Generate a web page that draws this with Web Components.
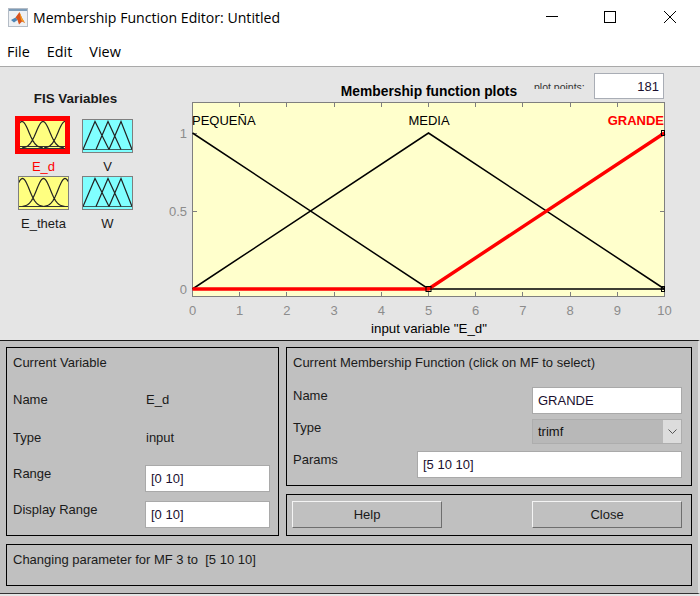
<!DOCTYPE html>
<html>
<head>
<meta charset="utf-8">
<style>
  html, body { margin: 0; padding: 0; background: #e5e5e5; }
  body { width: 700px; height: 596px; overflow: hidden; font-family: "Liberation Sans", Arial, sans-serif; }
</style>
</head>
<body>

<template id="title-tpl">
  <style>
    :host { display: flex; align-items: center; height: 34px; background: #fff; padding-left: 8px; font-family: "Open Sans", "Noto Sans", sans-serif; color: #000; }
    svg { display: block; flex: none; }
    .t { margin-left: 5px; flex: 1; font-size: 14.1px; white-space: nowrap; }
    .btns { display: flex; gap: 13px; margin-right: 7px; }
    .btns svg { width: 46px; height: 14px; }
  </style>
  <svg width="20" height="19" viewBox="0 0 20 19">
    <rect x="0.5" y="0.5" width="19" height="18" fill="#eef1f4" stroke="#b4bcc6"/>
    <rect x="1" y="1" width="18" height="2" fill="#7d9cb8"/>
    <path d="M3 12 L7.5 9.5 L9.5 12 L6 14.5 Z" fill="#4f86b5"/>
    <path d="M7.5 9.5 L11.5 4 L14 10 L17 15 L14 13.5 L11 16.5 L9.5 12 Z" fill="#d8521c"/>
    <path d="M11.5 4 L14 10 L17 15 L13 12 Z" fill="#f4a21f"/>
  </svg>
  <span class="t"><slot></slot></span>
  <span class="btns">
    <svg viewBox="0 0 46 14"><path d="M17 6.5 H29" stroke="#000" fill="none"/></svg>
    <svg viewBox="0 0 46 14"><rect x="16.5" y="1.5" width="11" height="11" stroke="#000" fill="none"/></svg>
    <svg viewBox="0 0 46 14"><path d="M17 1 L29 13 M29 1 L17 13" stroke="#000" fill="none"/></svg>
  </span>
</template>

<template id="menu-tpl">
  <style>
    :host { display: flex; gap: 17px; height: 33px; box-sizing: border-box; padding: 9px 0 0 7px; background: #fff; border-bottom: 1px solid #a9a9a9; font-family: "Open Sans", "Noto Sans", sans-serif; font-size: 14.4px; line-height: 18px; color: #000; }
  </style>
  <span>File</span><span>Edit</span><span>View</span>
</template>

<template id="fis-tpl">
  <style>
    :host { display: block; width: 160px; flex: none; color: #000; }
    h4 { margin: 0; font-size: 13.4px; line-height: 14px; font-weight: bold; color: #1a1a1a; width: 151px; text-align: center; padding-top: 25px; }
    .grid { display: grid; grid-template-columns: 51px 51px; column-gap: 13px; padding: 13px 0 0 18px; }
  </style>
  <h4>FIS Variables</h4>
  <div class="grid"><slot></slot></div>
</template>

<template id="var-tpl">
  <style>
    :host { display: block; width: 51px; font-size: 13px; color: #1a1a1a; text-align: center; }
    :host([selected]) { color: #f00; }
    .box { box-sizing: border-box; width: 51px; height: 34px; border: 1px solid #7f7f7f; display: block; }
    :host([selected]) .box { width: 55px; height: 38px; margin: -3px -1px -1px -3px; border: 5px solid #f00; }
    svg { display: block; width: 100%; height: 100%; }
    .lab { display: block; margin: 0 -6px; height: 23px; line-height: 14px; padding-top: 7px; box-sizing: border-box; white-space: nowrap; }
  </style>
  <span class="box"><svg></svg></span>
  <span class="lab"></span>
</template>

<template id="plot-tpl">
  <style>
    :host { display: block; width: 540px; height: 273px; flex: none; position: relative; }
    svg { display: block; position: absolute; left: 0; top: 0; }
    text { font-family: "Liberation Sans", Arial, sans-serif; font-size: 13px; }
    .g { fill: #8c8c8c; }
    .count { position: absolute; left: 434px; top: 6px; box-sizing: border-box; width: 70px; height: 26px; background: #fff; border: 1px solid #a9adb5; text-align: right; font-size: 13px; line-height: 25px; padding-right: 4px; color: #1a0f2e; }
    .pp { position: absolute; left: 374px; top: 13px; height: 9px; overflow: hidden; font-size: 10.5px; line-height: 14px; color: #333; white-space: nowrap; }
  </style>
  <svg width="540" height="273" viewBox="160 67 540 273"></svg>
  <div class="pp">plot points:</div>
  <div class="count">181</div>
</template>

<template id="field-tpl">
  <style>
    :host { display: block; box-sizing: border-box; height: 27px; background: #fff; border: 1px solid #a9a9a9; padding-left: 5px; font-size: 13px; line-height: 25px; color: #1a0f2e; white-space: nowrap; }
  </style>
  <slot></slot>
</template>

<template id="combo-tpl">
  <style>
    :host { display: flex; box-sizing: border-box; height: 25px; border: 1px solid #adadad; background: #b8b8b8; font-size: 13px; line-height: 23px; color: #111; }
    .v { flex: 1; padding-left: 5px; }
    .a { width: 18px; background: #dcdcdc; display: flex; align-items: center; justify-content: center; }
  </style>
  <span class="v"><slot></slot></span>
  <span class="a"><svg width="9" height="5" viewBox="0 0 9 5"><path d="M0.5 0.5 L4.5 4.5 L8.5 0.5" fill="none" stroke="#555"/></svg></span>
</template>

<template id="btn-tpl">
  <style>
    :host { display: block; box-sizing: border-box; width: 150px; height: 27px; background: #c0c0c0; border: 1px solid; border-color: #f4f4f4 #6e6e6e #6e6e6e #f4f4f4; text-align: center; font-size: 13px; line-height: 25px; color: #1a1a1a; }
  </style>
  <slot></slot>
</template>

<fis-window></fis-window>

<script>
  // small helper, every element just clones its template
  function tpl(id) {
    return document.getElementById(id).content.cloneNode(true);
  }
  function simple(name, id) {
    customElements.define(name, class extends HTMLElement {
      constructor() {
        super();
        this.attachShadow({ mode: 'open' }).appendChild(tpl(id));
      }
    });
  }
  simple('title-bar', 'title-tpl');
  simple('menu-bar', 'menu-tpl');
  simple('fis-list', 'fis-tpl');
  simple('text-field', 'field-tpl');
  simple('combo-box', 'combo-tpl');
  simple('push-button', 'btn-tpl');

  const NS = 'http://www.w3.org/2000/svg';

  // gaussian sampled to a path, same three-curve shape as the matlab thumbnails
  function bell(c, top, base) {
    let d = '';
    for (let x = c - 21; x <= c + 21; x += 1) {
      const y = base - (base - top) * Math.exp(-((x - c) * (x - c)) / (2 * 6.8 * 6.8));
      d += (d ? 'L' : 'M') + x + ' ' + y.toFixed(2) + ' ';
    }
    return d;
  }

  customElements.define('fis-var', class extends HTMLElement {
    constructor() {
      super();
      this.attachShadow({ mode: 'open' }).appendChild(tpl('var-tpl'));
    }
    connectedCallback() {
      const input = this.getAttribute('kind') === 'input';
      const selected = this.hasAttribute('selected');
      this.shadowRoot.querySelector('.lab').textContent = this.getAttribute('label');
      const svg = this.shadowRoot.querySelector('svg');
      svg.style.background = input ? '#ffff80' : '#80ffff';
      let d, w, h;
      if (input && selected) {
        w = 45; h = 28;
        d = bell(2, 0.5, 27) + bell(23, 0.5, 27) + bell(45, 0.5, 27);
      } else if (input) {
        w = 49; h = 32;
        d = bell(3.5, 1.5, 29.5) + bell(24.5, 1.5, 29.5) + bell(46, 1.5, 29.5);
      } else {
        w = 49; h = 32;
        d = 'M0 29.5 L12 1.5 L26 29.5 M13 29.5 L25 1.5 L38 29.5 M26 29.5 L38 1.5 L49 29.5';
      }
      svg.setAttribute('viewBox', `0 0 ${w} ${h}`);
      const base = document.createElementNS(NS, 'path');
      base.setAttribute('d', `M0 ${h - 2.5} H${w}` + (input && selected ? ` M0 ${h - 0.5} H${w}` : ''));
      base.setAttribute('stroke', input ? '#333' : '#3a5f5f');
      base.setAttribute('fill', 'none');
      svg.appendChild(base);
      const p = document.createElementNS(NS, 'path');
      p.setAttribute('d', d);
      p.setAttribute('fill', 'none');
      p.setAttribute('stroke', '#222');
      p.setAttribute('stroke-width', '1.2');
      svg.appendChild(p);
    }
  });

  customElements.define('mf-plot', class extends HTMLElement {
    constructor() {
      super();
      this.attachShadow({ mode: 'open' }).appendChild(tpl('plot-tpl'));
    }
    connectedCallback() {
      const svg = this.shadowRoot.querySelector('svg');
      const X = v => 192.5 + v * 47.2;
      const Y = v => 289 - v * 156;
      const add = (tag, attrs, text) => {
        const e = document.createElementNS(NS, tag);
        for (const k in attrs) e.setAttribute(k, attrs[k]);
        if (text != null) e.textContent = text;
        svg.appendChild(e);
        return e;
      };
      add('rect', { x: 192.5, y: 102.5, width: 472, height: 194, fill: '#ffffcc', stroke: '#7f7f7f' });
      for (let i = 0; i <= 10; i++) {
        const x = Math.floor(X(i)) + 0.5;
        add('path', { d: `M${x} 296 V292 M${x} 103 V107`, stroke: '#7f7f7f', fill: 'none' });
        add('text', { x: X(i), y: 315, 'text-anchor': 'middle', class: 'g' }, i);
      }
      [[0, '0'], [0.5, '0.5'], [1, '1']].forEach(([v, s]) => {
        const y = Math.round(Y(v)) + 0.5;
        add('path', { d: `M193 ${y} H197 M664 ${y} H660`, stroke: '#7f7f7f', fill: 'none' });
        add('text', { x: 187, y: y + 4.5, 'text-anchor': 'end', class: 'g' }, s);
      });
      const line = (pts, c, w) => add('polyline', {
        points: pts.map(p => X(p[0]) + ',' + Y(p[1])).join(' '), fill: 'none', stroke: c, 'stroke-width': w
      });
      line([[0, 1], [5, 0], [10, 0]], '#000', 1.5);
      line([[0, 0], [5, 1], [10, 0]], '#000', 1.5);
      line([[0, 0], [5, 0], [10, 1]], '#f00', 3.4);
      add('rect', { x: 426, y: 286.5, width: 5, height: 5, fill: 'none', stroke: '#000' });
      add('rect', { x: 661.5, y: 286.5, width: 3, height: 5, fill: 'none', stroke: '#000' });
      add('rect', { x: 661.5, y: 130.5, width: 3, height: 5, fill: 'none', stroke: '#000' });
      add('text', { x: 192, y: 124.5, fill: '#000' }, 'PEQUEÑA');
      add('text', { x: 429, y: 124.5, fill: '#000', 'text-anchor': 'middle' }, 'MEDIA');
      add('text', { x: 664, y: 124.5, fill: '#f00', 'text-anchor': 'end', 'font-weight': 'bold' }, 'GRANDE');
      add('text', { x: 429, y: 96, fill: '#000', 'text-anchor': 'middle', 'font-weight': 'bold', style: 'font-size:13.8px' }, 'Membership function plots');
      add('text', { x: 429, y: 333, fill: '#000', 'text-anchor': 'middle', style: 'font-size:13.3px' }, 'input variable "E_d"');
    }
  });

  customElements.define('fis-window', class extends HTMLElement {
    constructor() {
      super();
      this.attachShadow({ mode: 'open' }).innerHTML = `
        <style>
          :host { display: block; width: 700px; }
          .top { display: flex; height: 273px; background: #e5e5e5; }
          .bottom { box-sizing: border-box; height: 254px; background: #c0c0c0; border-top: 1px solid #1a1a1a; border-bottom: 1px solid #333; border-right: 2px solid #e0e0e0; padding: 6px 0 0 6px; display: grid; grid-template-columns: 273px 406px; grid-template-rows: 139px 42px 42px; column-gap: 7px; row-gap: 8px; font-size: 13px; color: #1a1a1a; }
          .cell { box-sizing: border-box; border: 1px solid #000; }
          .var { grid-row: 1 / 3; display: grid; grid-template-columns: 132px 125px; grid-template-rows: 35px 38px 44px 36px 34px; padding-left: 6px; }
          .var > span { padding-top: 9px; line-height: 15px; }
          .var .title { grid-column: 1 / 3; padding-top: 7px; }
          .var .raise { padding-top: 1px; }
          .var .val { padding-left: 1px; }
          .mf { display: grid; grid-template-columns: 124px 115px 150px; grid-template-rows: 39px 32px 32px 32px; padding-left: 6px; }
          .mf .title { grid-column: 1 / 4; padding-top: 7px; line-height: 15px; }
          .mf .lab { line-height: 15px; padding-top: 1px; }
          .mf .wide { grid-column: 2 / 4; }
          .btns { display: flex; justify-content: space-between; align-items: flex-start; padding: 6px 9px 0 5px; }
          .msg { grid-column: 1 / 3; padding: 7px 0 0 6px; line-height: 15px; white-space: pre; }
        </style>
        <title-bar>Membership Function Editor: Untitled</title-bar>
        <menu-bar></menu-bar>
        <div class="top">
          <fis-list>
            <fis-var kind="input" label="E_d" selected></fis-var>
            <fis-var kind="output" label="V"></fis-var>
            <fis-var kind="input" label="E_theta"></fis-var>
            <fis-var kind="output" label="W"></fis-var>
          </fis-list>
          <mf-plot></mf-plot>
        </div>
        <div class="bottom">
          <div class="cell var">
            <span class="title">Current Variable</span>
            <span>Name</span><span class="val">E_d</span>
            <span>Type</span><span class="val">input</span>
            <span class="raise">Range</span><text-field>[0 10]</text-field>
            <span class="raise">Display Range</span><text-field>[0 10]</text-field>
          </div>
          <div class="cell mf">
            <span class="title">Current Membership Function (click on MF to select)</span>
            <span class="lab">Name</span><span></span><text-field>GRANDE</text-field>
            <span class="lab">Type</span><span></span><combo-box>trimf</combo-box>
            <span class="lab">Params</span><text-field class="wide">[5 10 10]</text-field>
          </div>
          <div class="cell btns"><push-button>Help</push-button><push-button>Close</push-button></div>
          <div class="cell msg">Changing parameter for MF 3 to  [5 10 10]</div>
        </div>`;
    }
  });
</script>
</body>
</html>
